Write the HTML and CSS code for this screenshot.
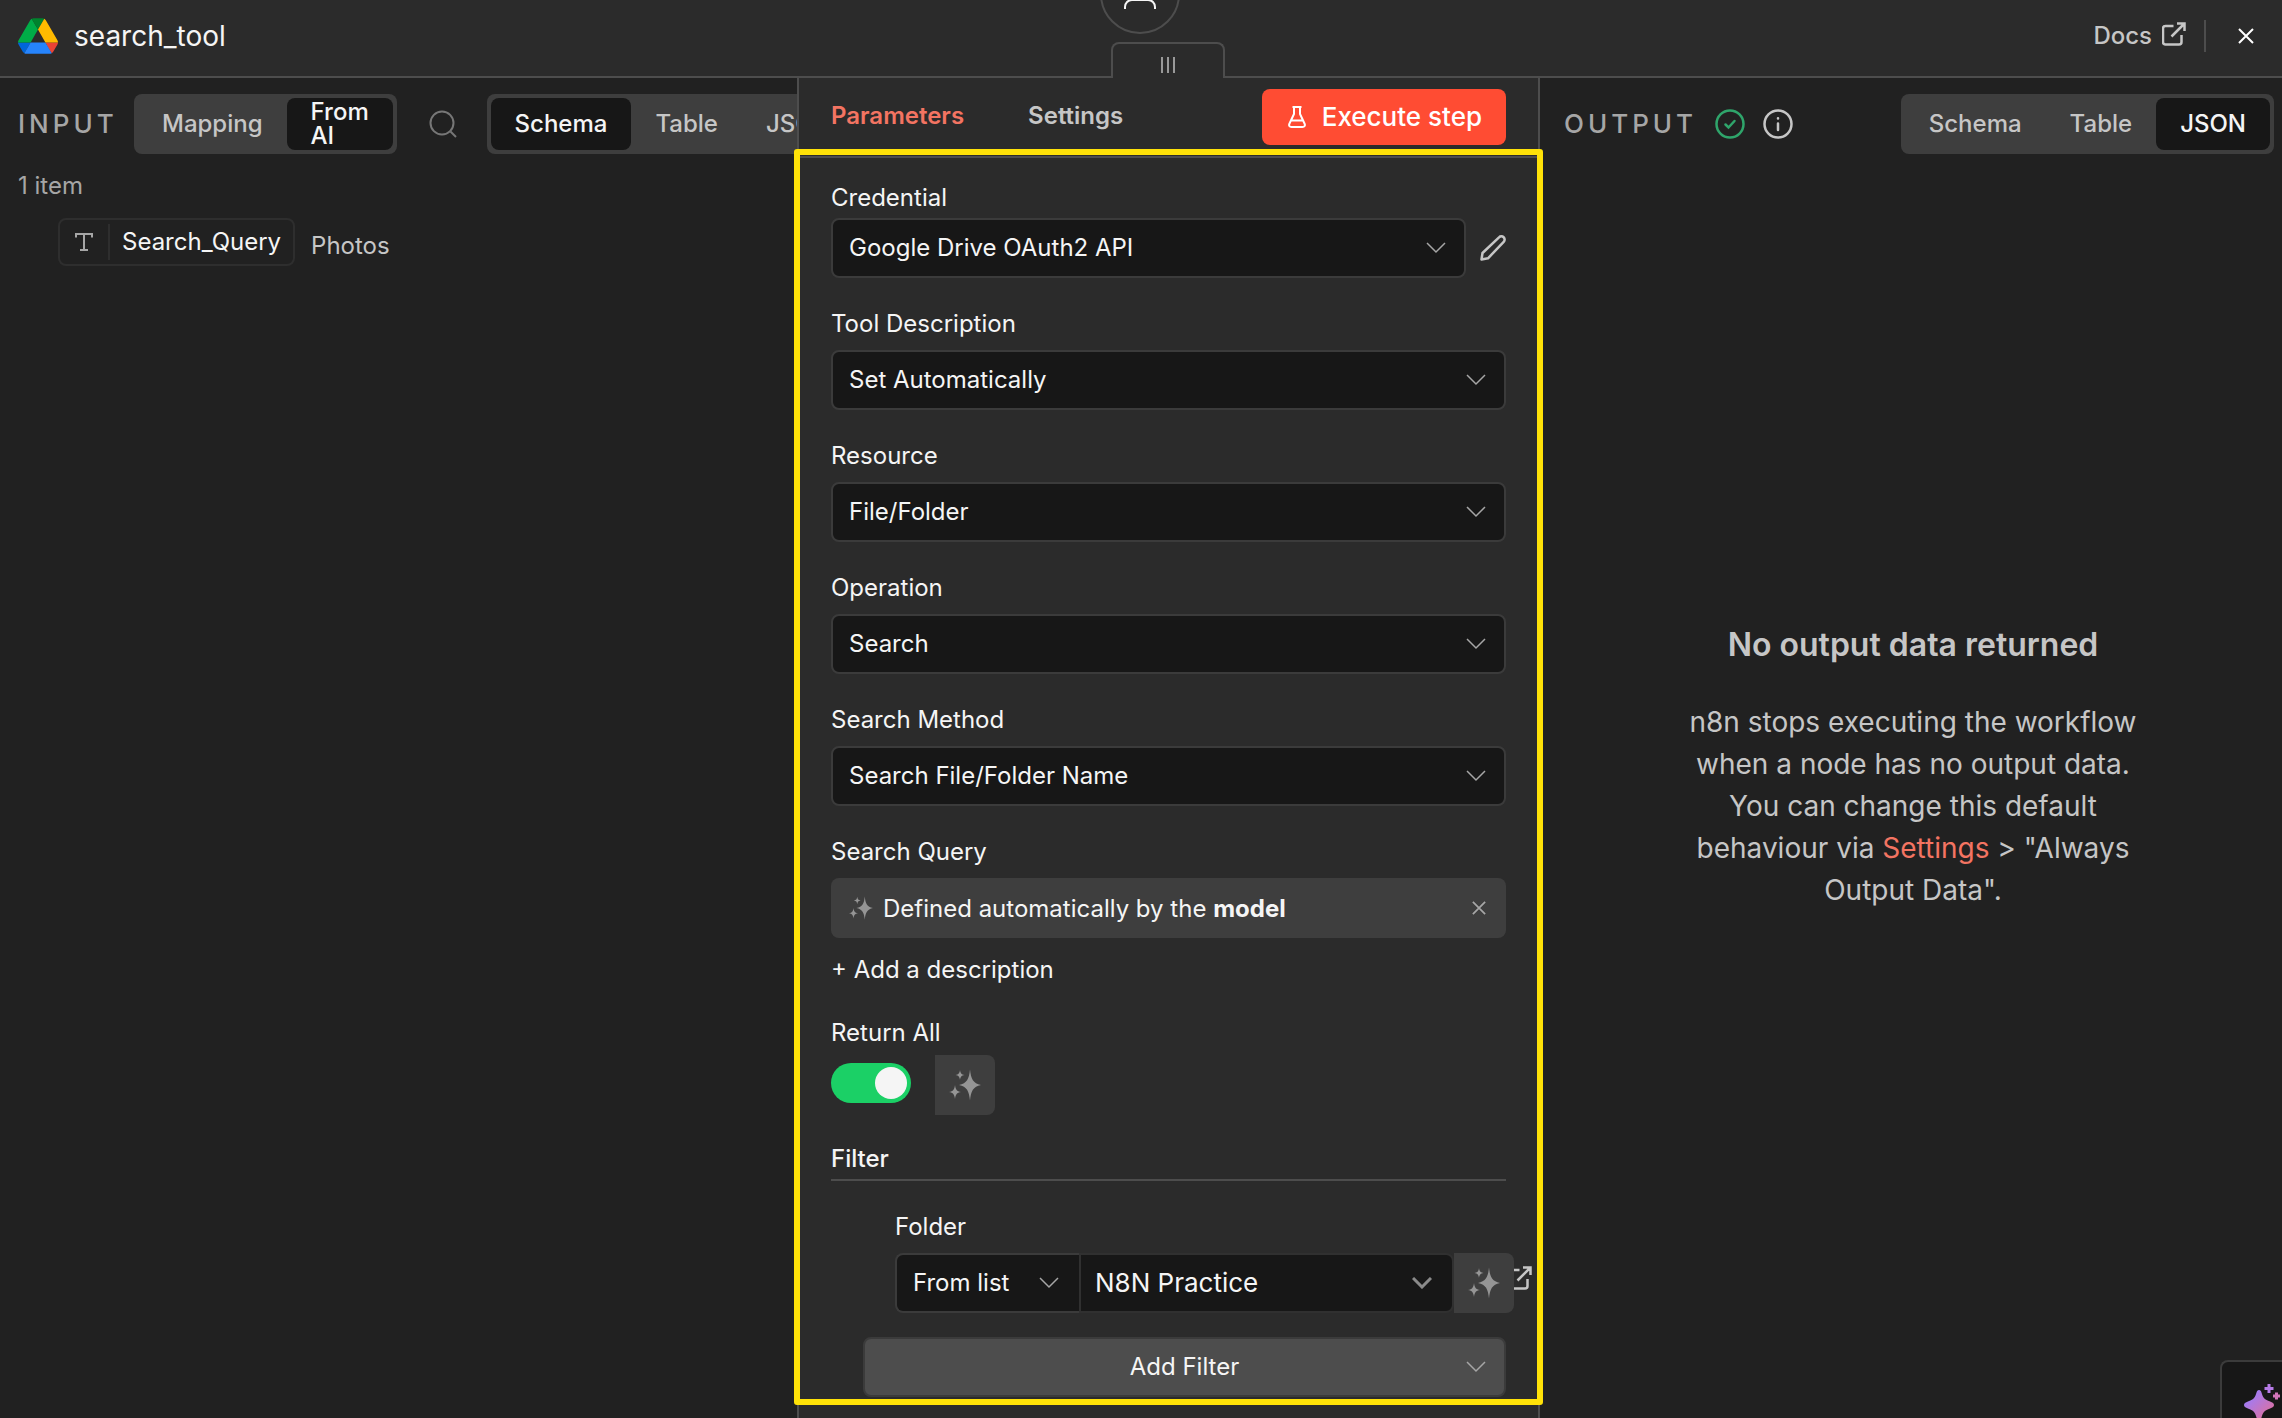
FILE: index.html
```html
<!DOCTYPE html>
<html lang="en">
<head>
  <meta charset="UTF-8" />
  <meta name="viewport" content="width=device-width, initial-scale=1.0" />
  <title>search_tool</title>
  <link rel="stylesheet" href="styles.css">
</head>
<body>
  <!-- shared icons -->
  <svg class="sprite" aria-hidden="true">
    <symbol id="chevron" viewBox="0 0 20 12"><path d="M1 1l9 9 9-9" /></symbol>
    <symbol id="external" viewBox="0 0 24 24"><path d="M11.5 4H3.5A2.5 2.5 0 0 0 1 6.500V20a2.500 2.500 0 0 0 2.500 2.500H17a2.500 2.500 0 0 0 2.500-2.500v-7M15 1.500h7.500V9M22 2L9.500 14.500" /></symbol>
    <symbol id="cross" viewBox="0 0 16 16"><path d="M1 1l14 14M15 1L1 15" /></symbol>
    <symbol id="sparkles" viewBox="0 0 32 32">
      <path d="M21 .5c1 9.500 3 13.700 11 15.500-8 1.800-10 6-11 15.500-1-9.500-3-13.700-11-15.500 8-1.800 10-6 11-15.500z" />
      <path d="M11 1c.5 3.300 1.300 4.400 4.500 5-3.200.6-4 1.700-4.500 5-.5-3.300-1.300-4.400-4.500-5 3.200-.6 4-1.700 4.500-5z" />
      <path d="M6 16c.7 4.800 1.700 6.200 6 7-4.300.8-5.300 2.200-6 7-.7-4.800-1.700-6.200-6-7 4.300-.8 5.300-2.200 6-7z" />
    </symbol>
  </svg>

  <div class="app">
    <header class="header">
      <div class="title">
        <svg class="logo" viewBox="0 0 87.3 78" aria-hidden="true">
          <path fill="#0066da" d="m6.600 66.850 3.850 6.650c.8 1.400 1.950 2.500 3.300 3.300l13.750-23.800h-27.500c0 1.550.4 3.100 1.200 4.500z" />
          <path fill="#00ac47" d="m43.650 25-13.750-23.800c-1.350.8-2.500 1.900-3.300 3.300l-25.400 44a9.060 9.060 0 0 0-1.200 4.500h27.500z" />
          <path fill="#ea4335" d="m73.550 76.800c1.350-.8 2.500-1.900 3.300-3.300l1.600-2.750 7.650-13.250c.8-1.400 1.200-2.950 1.200-4.500h-27.500l5.850 11.500z" />
          <path fill="#00832d" d="m43.650 25 13.750-23.800c-1.350-.8-2.900-1.200-4.500-1.200h-18.500c-1.600 0-3.150.45-4.500 1.200z" />
          <path fill="#2684fc" d="m59.800 53h-32.300l-13.750 23.800c1.350.8 2.900 1.200 4.500 1.200h50.800c1.600 0 3.150-.45 4.500-1.200z" />
          <path fill="#ffba00" d="m73.400 26.500-12.700-22c-.8-1.400-1.950-2.500-3.300-3.300l-13.750 23.800 16.150 28h27.450c0-1.550-.4-3.100-1.200-4.500z" />
        </svg>
        <h1>search_tool</h1>
      </div>
      <div class="header-actions">
        <a class="docs" href="#docs">Docs <svg class="icon-external"><use href="#external" /></svg></a>
        <button class="close" aria-label="Close"><svg class="icon-cross"><use href="#cross" /></svg></button>
      </div>
    </header>

    <main class="panels">
      <section class="panel input-panel">
        <div class="panel-head">
          <h2>Input</h2>
          <div class="switch">
            <button>Mapping</button>
            <button class="active from-ai">From AI</button>
          </div>
          <button class="search" aria-label="Search">
            <svg viewBox="0 0 28 28"><circle cx="13" cy="13" r="11.5" /><path d="M21.5 21.5L27 27" /></svg>
          </button>
          <div class="switch">
            <button class="active">Schema</button>
            <button>Table</button>
            <button>JSON</button>
          </div>
        </div>
        <p class="count">1 item</p>
        <div class="schema-row">
          <span class="pill">
            <svg class="type" viewBox="0 0 18 18"><path d="M1 4.500V1h16v3.500M9 1v16M5 17h8" /></svg>
            <span class="pill-name">Search_Query</span>
          </span>
          <span class="pill-value">Photos</span>
        </div>
      </section>

      <section class="settings">
        <button class="node-parent" aria-label="Parent node">
          <svg viewBox="0 0 32 32"><path d="M1 32v-2a7 7 0 0 1 7-7h16a7 7 0 0 1 7 7v2" /></svg>
        </button>
        <button class="drag" aria-label="Drag panel"><i></i><i></i><i></i></button>

        <nav class="tabs">
          <button class="tab active">Parameters</button>
          <button class="tab">Settings</button>
          <button class="execute">
            <svg viewBox="0 0 18 22"><path d="M4.500 1h9M6 1v7L1.500 17.500C.5 19.500 1.500 21 3.500 21h11c2 0 3-1.500 2-3.500L12 8V1M3.500 14.500h11" /></svg>
            Execute step
          </button>
        </nav>

        <form class="form">
          <div class="field tight">
            <label for="credential">Credential</label>
            <div class="row">
              <div class="select">
                <select id="credential"><option>Google Drive OAuth2 API</option></select>
                <svg class="chevron"><use href="#chevron" /></svg>
              </div>
              <button type="button" class="edit" aria-label="Edit credential">
                <svg viewBox="0 0 26 26"><path d="M1.500 24.500l1-6.500L19 2.300a3.100 3.100 0 0 1 4.700 4.600L8 23.300z" /></svg>
              </button>
            </div>
          </div>
          <div class="field">
            <label for="description">Tool Description</label>
            <div class="select">
              <select id="description"><option>Set Automatically</option></select>
              <svg class="chevron"><use href="#chevron" /></svg>
            </div>
          </div>
          <div class="field">
            <label for="resource">Resource</label>
            <div class="select">
              <select id="resource"><option>File/Folder</option></select>
              <svg class="chevron"><use href="#chevron" /></svg>
            </div>
          </div>
          <div class="field">
            <label for="operation">Operation</label>
            <div class="select">
              <select id="operation"><option>Search</option></select>
              <svg class="chevron"><use href="#chevron" /></svg>
            </div>
          </div>
          <div class="field">
            <label for="method">Search Method</label>
            <div class="select">
              <select id="method"><option>Search File/Folder Name</option></select>
              <svg class="chevron"><use href="#chevron" /></svg>
            </div>
          </div>
          <div class="field">
            <span class="label">Search Query</span>
            <div class="override">
              <svg class="sparkles-small"><use href="#sparkles" /></svg>
              <span class="override-text">Defined automatically by the <strong>model</strong></span>
              <button type="button" class="clear" aria-label="Clear"><svg><use href="#cross" /></svg></button>
            </div>
            <button type="button" class="add-description">+ Add a description</button>
          </div>
          <div class="field return-all">
            <label for="returnAll">Return All</label>
            <div class="row">
              <input type="checkbox" id="returnAll" class="toggle" checked>
              <button type="button" class="ai" aria-label="Let the model define Return All"><svg><use href="#sparkles" /></svg></button>
            </div>
          </div>

          <h3>Filter</h3>
          <div class="field folder">
            <label for="folder">Folder</label>
            <div class="row locator">
              <div class="select mode">
                <select aria-label="Folder mode"><option>From list</option></select>
                <svg class="chevron"><use href="#chevron" /></svg>
              </div>
              <div class="select value">
                <select id="folder"><option>N8N Practice</option></select>
                <svg class="chevron"><use href="#chevron" /></svg>
              </div>
              <button type="button" class="ai" aria-label="Let the model define Folder"><svg><use href="#sparkles" /></svg></button>
              <a class="open-folder" href="#folder" aria-label="Open folder"><svg class="icon-external"><use href="#external" /></svg></a>
            </div>
          </div>
          <div class="select add-filter">
            <select aria-label="Add Filter"><option>Add Filter</option></select>
            <svg class="chevron"><use href="#chevron" /></svg>
          </div>
        </form>
        <div class="highlight"></div>
      </section>

      <section class="panel output-panel">
        <div class="panel-head">
          <h2>Output</h2>
          <svg class="status ok" viewBox="0 0 30 30"><circle cx="15" cy="15" r="13.5" /><path d="M10.500 15.500l3 3 6-6.500" /></svg>
          <svg class="status" viewBox="0 0 30 30"><circle cx="15" cy="15" r="13.5" /><path d="M15 21v-6.500M15 9.200v.3" /></svg>
          <div class="switch push">
            <button>Schema</button>
            <button>Table</button>
            <button class="active">JSON</button>
          </div>
        </div>
        <div class="empty">
          <h4>No output data returned</h4>
          <p>n8n stops executing the workflow when a node has no output data. You can change this default behaviour via <a href="#settings">Settings</a> &gt; "Always Output Data".</p>
        </div>
      </section>
    </main>
  </div>

  <button class="assistant" aria-label="AI assistant">
    <svg viewBox="0 0 40 40">
      <defs>
        <linearGradient id="glow" x1="0" y1="0" x2="1" y2="1">
          <stop offset="0.2" stop-color="#a07bf5" />
          <stop offset="0.9" stop-color="#e0709a" />
        </linearGradient>
      </defs>
      <path fill="url(#glow)" d="M15 6c1.500 0 2 1 2.500 2.500 1.500 5 2.500 7 8 8.800C29 18.500 30 19.500 30 21s-1 2.500-4.500 3.700c-5.500 1.800-6.500 3.800-8 8.800C17 35 16.500 36 15 36s-2-1-2.500-2.500c-1.500-5-2.500-7-8-8.800C1 23.500 0 22.500 0 21s1-2.500 4.500-3.700c5.500-1.800 6.500-3.800 8-8.800C13 7 13.500 6 15 6z" />
      <path stroke="#b57ae6" d="M25 0v9M20.500 4.500h9" />
      <path stroke="#d275b8" d="M32.500 8.500v7M29 12h7" />
    </svg>
  </button>
</body>
</html>
```
FILE: styles.css
```css
:root {
  --bg: #212121;
  --bg-light: #2b2b2b;
  --bg-control: #171717;
  --bg-muted: #3e3e3e;
  --border: #4d4d4d;
  --border-control: #3b3b3b;
  --text: #f5f5f5;
  --text-light: #c6c6c6;
  --text-dim: #a6a6a6;
  --primary: #ff4c33;
  --primary-text: #f37462;
}

* {
  box-sizing: border-box;
}

body {
  margin: 0;
  font-family: Inter, sans-serif;
  font-size: 24px;
  line-height: 32px;
  background: var(--bg);
  color: var(--text);
  overflow: hidden;
}

h1, h2, h3, h4, p {
  margin: 0;
}

button, select {
  font: inherit;
  color: inherit;
  border: none;
  background: none;
  padding: 0;
  cursor: pointer;
}

a {
  color: inherit;
  text-decoration: none;
}

svg {
  display: block;
  flex: none;
  fill: none;
  stroke: currentColor;
  stroke-width: 2;
}

.sprite {
  position: absolute;
  width: 0;
  height: 0;
}

.app {
  display: flex;
  flex-direction: column;
  height: 100vh;
}

/* header */
.header {
  display: flex;
  justify-content: space-between;
  height: 78px;
  flex: none;
  padding: 0 28px 4px 18px;
  background: var(--bg-light);
  border-bottom: 2px solid var(--border);
}

.title, .header-actions, .docs {
  display: flex;
  align-items: center;
}

.title {
  gap: 16px;
}

.title h1 {
  font-size: 28px;
  font-weight: 400;
}

.logo {
  width: 40px;
  height: 36px;
  stroke: none;
}

.header-actions {
  gap: 18px;
}

.docs {
  gap: 10px;
  font-weight: 500;
  color: var(--text-light);
}

.icon-external {
  width: 24px;
  height: 24px;
  stroke-width: 2.5;
}

.docs .icon-external {
  margin-bottom: 4px;
}

.close {
  height: 32px;
  padding-left: 32px;
  border-left: 2px solid var(--border);
  color: #fff;
}

.icon-cross {
  width: 16px;
  height: 16px;
}

/* panels */
.panels {
  flex: 1;
  min-height: 0;
  display: grid;
  grid-template-columns: minmax(0, 797fr) 743px minmax(0, 742fr);
}

.panel {
  display: flex;
  flex-direction: column;
  overflow: hidden;
}

.panel-head {
  display: flex;
  align-items: center;
  padding-top: 16px;
}

.panel-head h2 {
  font-size: 26px;
  font-weight: 500;
  letter-spacing: 4px;
  text-transform: uppercase;
  color: var(--text-dim);
}

.switch {
  display: flex;
  flex: none;
  height: 60px;
  padding: 4px;
  border-radius: 8px;
  background: var(--bg-muted);
}

.switch button {
  padding: 0 24px;
  border-radius: 8px;
  font-weight: 500;
  line-height: 24px;
  text-align: left;
  color: var(--text-light);
}

.switch .active {
  background: var(--bg-control);
  color: var(--text);
}

.switch .from-ai {
  width: 106px;
}

.push {
  margin-left: auto;
}

.input-panel .panel-head {
  padding-left: 18px;
}

.input-panel h2 {
  width: 116px;
  flex: none;
}

.search {
  margin: 0 30px 0 32px;
  color: #777;
}

.search svg {
  width: 28px;
  height: 28px;
}

.count {
  margin: 16px 18px 0;
  color: var(--text-dim);
}

.schema-row {
  display: flex;
  align-items: center;
  gap: 16px;
  margin: 16px 0 0 58px;
}

.pill {
  display: flex;
  align-items: center;
  height: 48px;
  padding: 4px 12px 4px 15px;
  border: 2px solid #2e2e2e;
  border-radius: 8px;
}

.type {
  width: 18px;
  height: 18px;
  color: var(--text-dim);
}

.pill-name {
  margin-left: 15px;
  padding: 2px 0 2px 12px;
  border-left: 2px solid #2e2e2e;
}

.pill-value {
  padding-top: 8px;
  color: var(--text-light);
}

/* node settings */
.settings {
  position: relative;
  display: flex;
  flex-direction: column;
  background: var(--bg-light);
  border: solid var(--border);
  border-width: 0 2px;
}

.node-parent {
  position: absolute;
  bottom: 100%;
  left: 50%;
  display: grid;
  justify-content: center;
  align-content: start;
  width: 80px;
  height: 80px;
  margin: 0 0 44px -69px;
  padding-top: 21px;
  border: 2px solid var(--border);
  border-radius: 50%;
}

.node-parent svg {
  width: 32px;
  height: 32px;
}

.drag {
  position: absolute;
  bottom: 100%;
  left: 50%;
  display: flex;
  justify-content: center;
  align-items: center;
  gap: 4px;
  width: 114px;
  height: 36px;
  margin-left: -58px;
  padding-top: 8px;
  border: 2px solid var(--border);
  border-bottom: none;
  border-radius: 8px 8px 0 0;
  background: var(--bg-light);
}

.drag i {
  width: 2px;
  height: 16px;
  background: #999;
}

.tabs {
  display: flex;
  align-items: center;
  height: 80px;
  flex: none;
  padding-right: 32px;
  border-bottom: 2px solid var(--border);
}

.tab {
  align-self: stretch;
  padding: 0 32px 2px;
  font-weight: 600;
  color: var(--text-light);
}

.tab.active {
  color: var(--primary-text);
}

.execute {
  display: flex;
  align-items: center;
  gap: 16px;
  height: 56px;
  margin-left: auto;
  padding: 0 24px 0 26px;
  border-radius: 8px;
  background: var(--primary);
  color: #fff;
  font-size: 26px;
  font-weight: 500;
}

.execute svg {
  width: 18px;
  height: 22px;
}

.form {
  display: flex;
  flex-direction: column;
  padding: 24px 32px 0;
}

.field {
  display: flex;
  flex-direction: column;
  align-items: stretch;
  gap: 10px;
  margin-bottom: 30px;
}

.field.tight {
  gap: 4px;
}

.row {
  display: flex;
  align-items: center;
}

.row .select {
  flex: 1;
}

.select {
  display: grid;
  align-items: center;
}

.select select, .select .chevron {
  grid-area: 1 / 1;
}

.select select {
  appearance: none;
  width: 100%;
  height: 60px;
  padding: 0 50px 0 16px;
  border: 2px solid var(--border-control);
  border-radius: 8px;
  background: var(--bg-control);
}

.chevron {
  justify-self: end;
  width: 20px;
  height: 12px;
  margin-right: 20px;
  color: var(--text-dim);
  stroke-width: 1.5;
  pointer-events: none;
}

.edit {
  margin-left: 14px;
  color: var(--text-light);
}

.edit svg {
  width: 26px;
  height: 26px;
  stroke-width: 2.5;
  stroke-linejoin: round;
}

.override {
  display: flex;
  align-items: center;
  gap: 10px;
  height: 60px;
  padding: 0 20px 0 18px;
  border-radius: 8px;
  background: var(--bg-muted);
}

.override-text {
  padding-top: 2px;
}

.override strong {
  font-weight: 700;
}

.sparkles-small {
  width: 24px;
  height: 24px;
  fill: #959595;
  stroke: none;
}

.clear {
  margin-left: auto;
  color: var(--text-dim);
}

.clear svg {
  width: 14px;
  height: 14px;
}

.add-description {
  align-self: flex-start;
  margin-top: 4px;
  line-height: 35px;
}

.return-all {
  gap: 6px;
  margin-bottom: 28px;
}

.toggle {
  appearance: none;
  display: flex;
  justify-content: flex-end;
  width: 80px;
  height: 40px;
  margin: 0 24px 4px 0;
  padding: 4px;
  border-radius: 20px;
  background: #1bd066;
}

.toggle::after {
  content: "";
  width: 32px;
  height: 32px;
  border-radius: 50%;
  background: var(--text);
}

.ai {
  display: grid;
  place-items: center;
  width: 60px;
  height: 60px;
  border-radius: 0 8px 8px 0;
  background: var(--bg-muted);
}

.ai svg {
  width: 32px;
  height: 32px;
  fill: #959595;
  stroke: none;
}

.form h3 {
  margin-bottom: 30px;
  padding-bottom: 4px;
  border-bottom: 2px solid var(--border);
  font-size: 24px;
  font-weight: 500;
}

.folder {
  margin: 0 -26px 24px 64px;
}

.locator .mode {
  flex: 0 0 184px;
}

.locator .mode select {
  padding-right: 0;
  border-right: none;
  border-radius: 8px 0 0 8px;
}

.locator .value select {
  padding-left: 14px;
  border-color: #303030;
  border-radius: 0 8px 8px 0;
  font-size: 26px;
}

.locator .value .chevron {
  margin-right: 22px;
  stroke-width: 3;
  color: #8a8a8a;
}

.locator .ai {
  position: relative;
}

.open-folder {
  margin: 0 0 10px -6px;
  color: var(--text-light);
}

.add-filter {
  margin-left: 32px;
}

.add-filter select {
  padding: 0;
  background: var(--border);
  text-align: center;
  text-align-last: center;
}

/* outline drawn over the parameter list */
.highlight {
  position: absolute;
  inset: 71px -5px 13px;
  border: 6px solid #ffe208;
  border-radius: 3px;
  pointer-events: none;
}

/* output */
.output-panel .panel-head {
  padding-left: 24px;
  padding-right: 8px;
}

.status {
  width: 30px;
  height: 30px;
  margin-left: 18px;
  color: var(--text-light);
  stroke-width: 2.5;
  stroke-linecap: round;
}

.status.ok {
  color: #2fa56b;
}

.empty {
  flex: 1;
  display: flex;
  flex-direction: column;
  align-items: center;
  justify-content: center;
  gap: 36px;
  padding: 0 0 36px 4px;
  text-align: center;
  color: var(--text-light);
}

.empty h4 {
  font-size: 32px;
  font-weight: 600;
  line-height: 40px;
}

.empty p {
  max-width: 480px;
  font-size: 28px;
  line-height: 42px;
}

.empty a {
  color: var(--primary-text);
}

.assistant {
  position: fixed;
  right: 0;
  bottom: 0;
  display: grid;
  align-content: start;
  width: 62px;
  height: 58px;
  padding: 22px 0 0 22px;
  border: solid var(--border-control);
  border-width: 2px 0 0 2px;
  border-radius: 8px 0 0 0;
  background: var(--bg-control);
  overflow: hidden;
}

.assistant svg {
  width: 40px;
  height: 40px;
  stroke: none;
  stroke-width: 3;
}
```
